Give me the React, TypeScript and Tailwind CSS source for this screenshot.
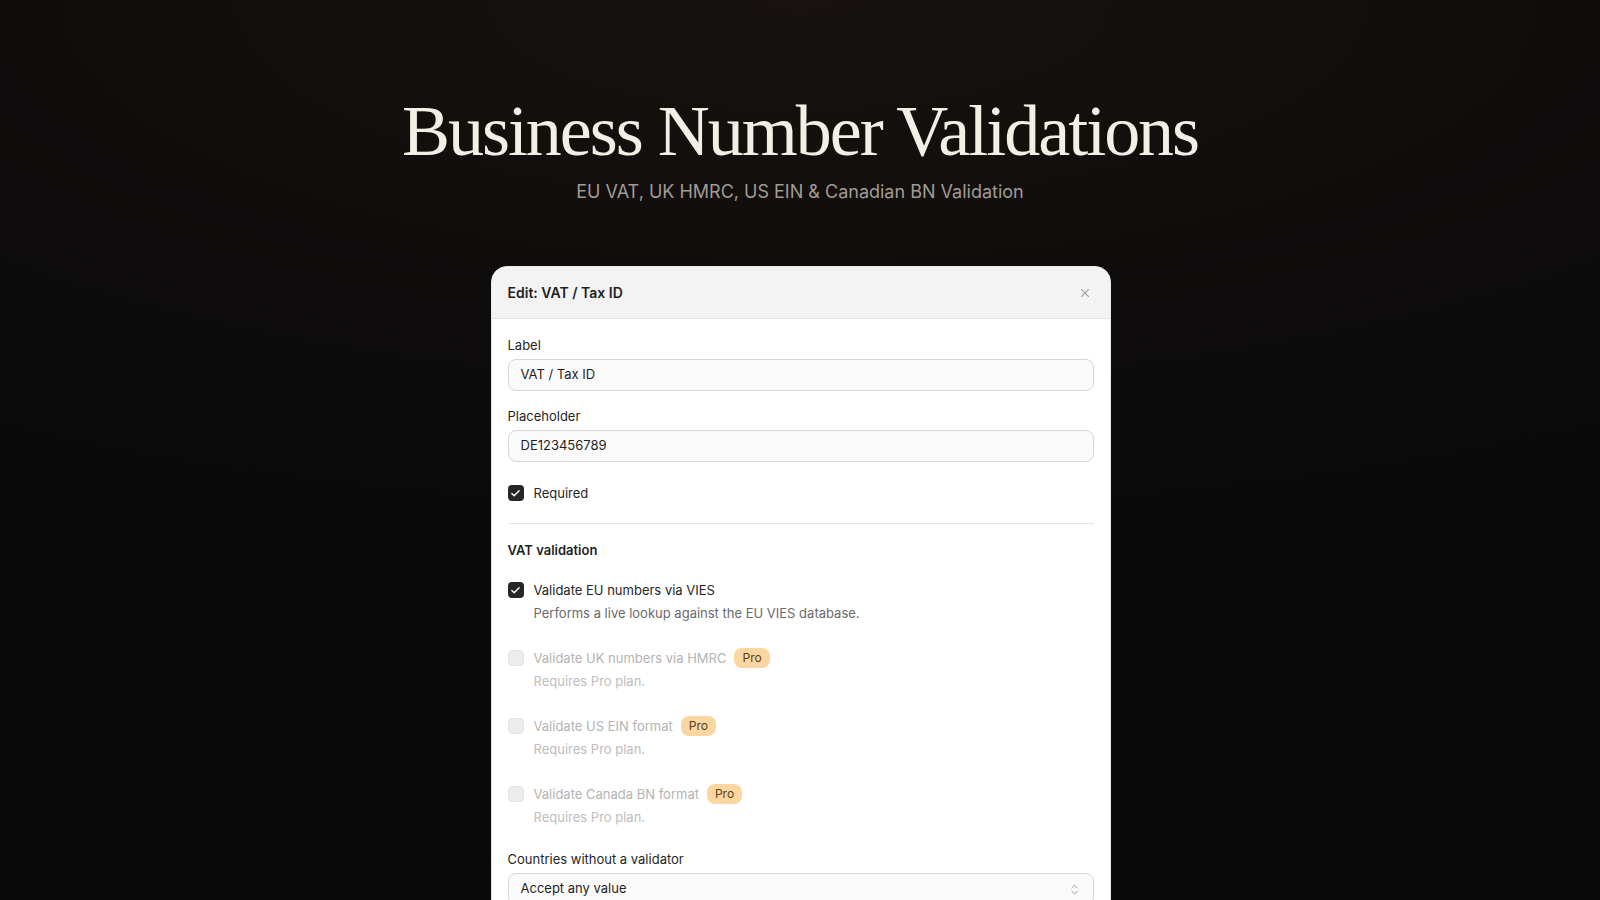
import React from "react";
import { X, Check, ChevronsUpDown } from "lucide-react";

function CheckBox({ checked, disabled }: { checked?: boolean; disabled?: boolean }) {
  if (checked) {
    return (
      <span className="flex h-4 w-4 shrink-0 items-center justify-center rounded-[4px] bg-[#262626]">
        <Check size={11} strokeWidth={3} className="text-white" />
      </span>
    );
  }
  return (
    <span
      className={
        disabled
          ? "h-4 w-4 shrink-0 rounded-[4px] border border-[#e6e6e6] bg-[#ececec]"
          : "h-4 w-4 shrink-0 rounded-[4px] border border-[#cfcfcf] bg-white"
      }
    />
  );
}

function Option({
  title,
  desc,
  checked,
  disabled,
  pro,
}: {
  title: string;
  desc: string;
  checked?: boolean;
  disabled?: boolean;
  pro?: boolean;
}) {
  return (
    <div className="flex flex-col">
      <div className="flex h-5 items-center gap-[10px]">
        <CheckBox checked={checked} disabled={disabled} />
        <span className={disabled ? "text-[13px] leading-5 text-[#b3b3b3]" : "text-[13px] leading-5 text-[#262626]"}>
          {title}
        </span>
        {pro && (
          <span className="ml-[-2px] flex h-5 items-center rounded-lg bg-[#fbd6a1] px-2 text-[12px] leading-5 text-[#5c3d14]">
            Pro
          </span>
        )}
      </div>
      <div
        className={
          disabled
            ? "mt-[3px] pl-[26px] text-[13px] leading-5 text-[#bdbdbd]"
            : "mt-[3px] pl-[26px] text-[13px] leading-5 text-[#6b6b6b]"
        }
      >
        {desc}
      </div>
    </div>
  );
}

export default function App() {
  return (
    <div
      className="flex min-h-screen flex-col items-center overflow-hidden bg-[radial-gradient(ellipse_90%_55%_at_50%_0%,#17120f_0%,#0f0d0c_55%,#0a0a0a_100%)]"
      style={{ fontFamily: "Inter, 'Noto Sans', sans-serif" }}
    >
      <h1
        className="mt-[95px] text-[72px] font-normal leading-[72px] tracking-[-0.028em] text-[#f4efe6]"
        style={{ fontFamily: "'Liberation Serif', 'DejaVu Serif', serif" }}
      >
        Business Number Validations
      </h1>
      <p className="mt-[11px] text-[18px] leading-7 text-[#a19b95]">
        EU VAT, UK HMRC, US EIN &amp; Canadian BN Validation
      </p>

      <div className="ml-[1px] mt-[60px] w-[620px] overflow-hidden rounded-2xl border border-[#e8e8e8] bg-white">
        <div className="flex h-[52px] items-center justify-between border-b border-[#e4e4e4] bg-[#f3f3f3] px-4">
          <span className="text-[14px] font-semibold text-[#1f1f1f]">Edit: VAT / Tax ID</span>
          <X size={14} strokeWidth={1.75} className="mr-[2px] text-[#8a8a8a]" />
        </div>

        <div className="flex flex-col px-4 pt-4 pb-6">
          <label className="text-[13px] leading-5 text-[#262626]">Label</label>
          <div className="mt-1 flex h-8 items-center rounded-lg border border-[#d6d6d6] bg-[#fafafa] px-3 text-[13px] text-[#1f1f1f]">
            VAT / Tax ID
          </div>

          <label className="mt-[15px] text-[13px] leading-5 text-[#262626]">Placeholder</label>
          <div className="mt-1 flex h-8 items-center rounded-lg border border-[#d6d6d6] bg-[#fafafa] px-3 text-[13px] text-[#1f1f1f]">
            DE123456789
          </div>

          <div className="mt-[21px] flex h-5 items-center gap-[10px]">
            <CheckBox checked />
            <span className="text-[13px] leading-5 text-[#262626]">Required</span>
          </div>

          <div className="mt-5 border-t border-[#e6e6e6]" />

          <div className="mt-4 text-[13px] font-semibold leading-5 text-[#1f1f1f]">VAT validation</div>

          <div className="mt-5 flex flex-col gap-[25px]">
            <Option
              title="Validate EU numbers via VIES"
              desc="Performs a live lookup against the EU VIES database."
              checked
            />
            <Option title="Validate UK numbers via HMRC" desc="Requires Pro plan." disabled pro />
            <Option title="Validate US EIN format" desc="Requires Pro plan." disabled pro />
            <Option title="Validate Canada BN format" desc="Requires Pro plan." disabled pro />
          </div>

          <label className="mt-[22px] text-[13px] leading-5 text-[#262626]">Countries without a validator</label>
          <div className="mt-1 flex h-8 items-center justify-between rounded-lg border border-[#d6d6d6] bg-[#fafafa] px-3 text-[13px] text-[#1f1f1f]">
            <span>Accept any value</span>
            <ChevronsUpDown size={13} strokeWidth={1.5} className="text-[#8a8a8a]" />
          </div>
        </div>
      </div>
    </div>
  );
}
